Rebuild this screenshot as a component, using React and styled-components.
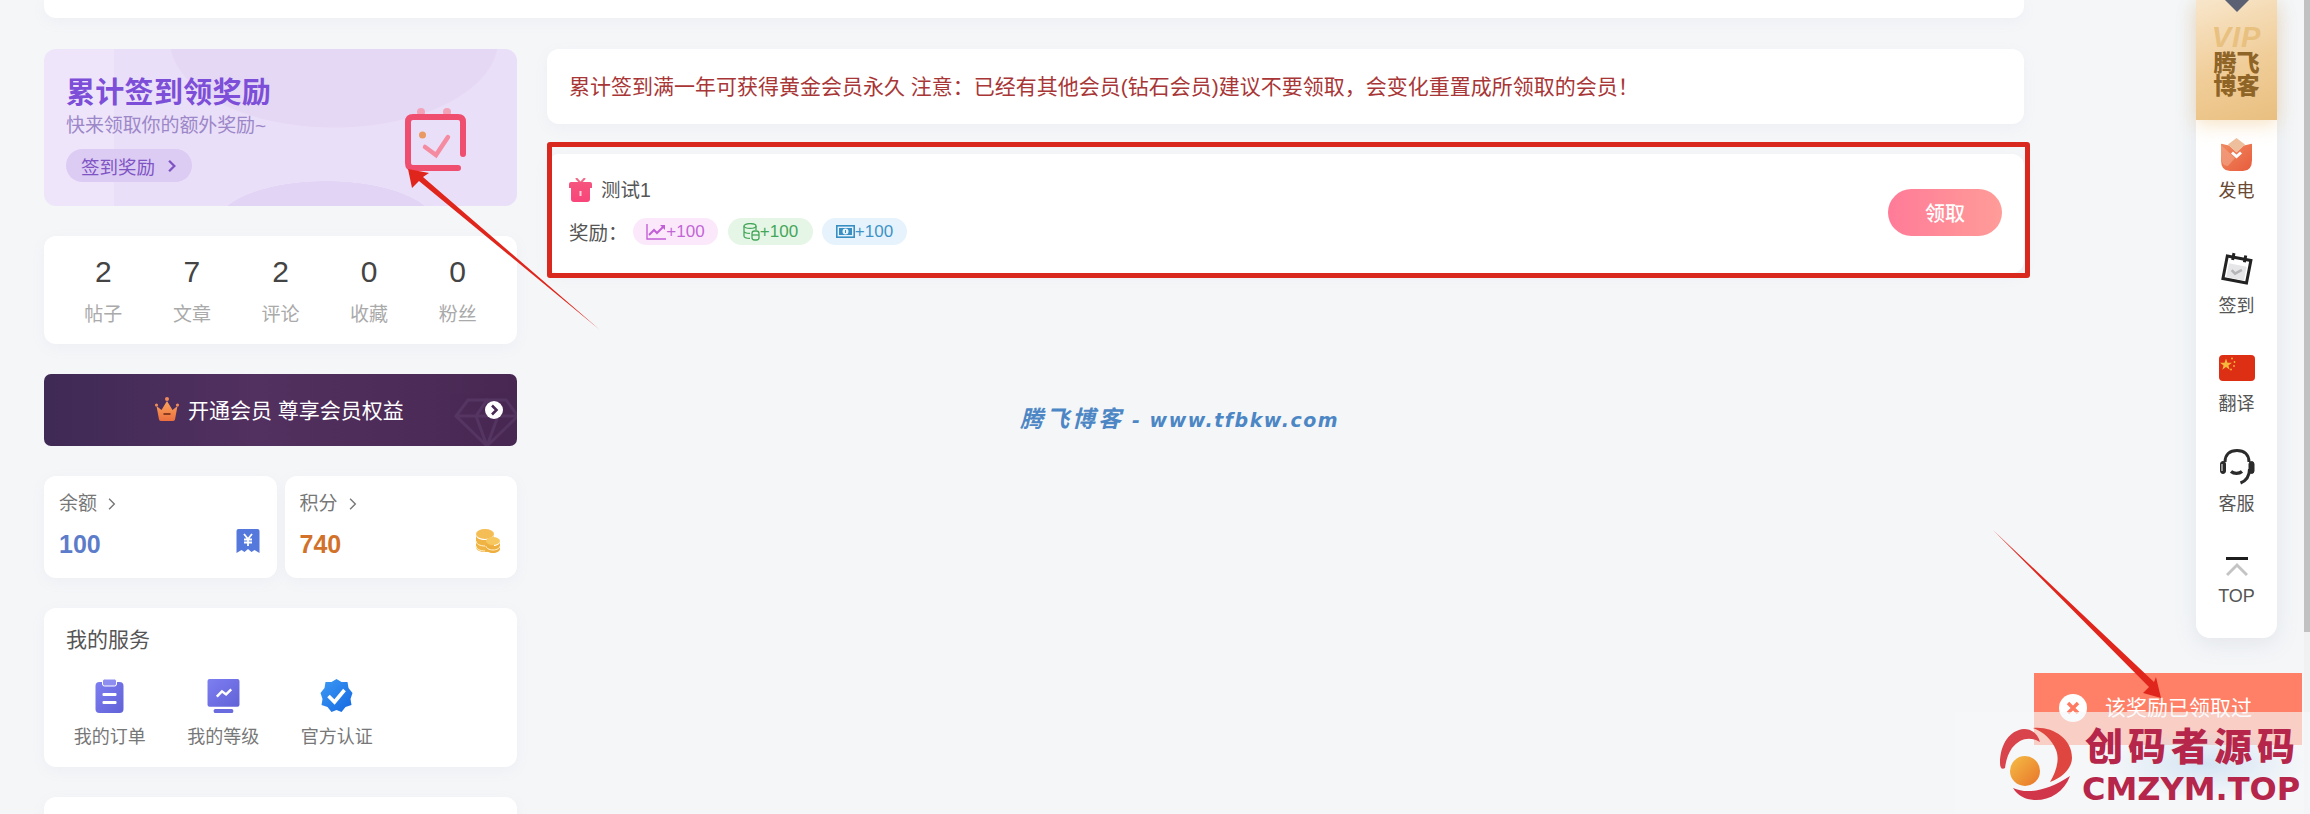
import styled, { createGlobalStyle } from "styled-components";

const GlobalStyle = createGlobalStyle`
  html, body {
    margin: 0;
    padding: 0;
    overflow: hidden;
    background: #f4f6f8;
  }
  * {
    box-sizing: border-box;
  }
  body {
    font-family: "Liberation Sans", "Noto Sans CJK SC", sans-serif;
  }
`;

const NOTICE_TEXT =
  "累计签到满一年可获得黄金会员永久 注意\uFF1A已经有其他会员(钻石会员)建议不要领取\uFF0C会变化重置成所领取的会员\uFF01";

const Page = styled.div`
  position: relative;
  width: 2310px;
  height: 814px;
  overflow: hidden;
  padding: 0 286px 0 44px;
  background: #f4f6f8;
`;

const Card = styled.div`
  background: #fff;
  border-radius: 12px;
  box-shadow: 0 4px 14px rgba(150, 160, 180, 0.07);
`;

const TopCard = styled(Card)`
  height: 18px;
  border-radius: 0 0 12px 12px;
  margin-bottom: 31px;
`;

const Main = styled.div`
  display: grid;
  grid-template-columns: 473px 1477px;
  column-gap: 30px;
`;

const Side = styled.aside`
  display: flex;
  flex-direction: column;
  gap: 30px;
`;

const Content = styled.main`
  display: flex;
  flex-direction: column;
  gap: 30px;
`;

/* sign banner */
const Banner = styled.div`
  height: 157px;
  border-radius: 12px;
  display: flex;
  justify-content: space-between;
  padding: 27px 50px 0 22px;
  background:
    radial-gradient(ellipse 165px 88px at 290px -9px, #e5d8f5 99%, transparent 100%),
    radial-gradient(ellipse 110px 44px at 282px 176px, #e2d4f5 99%, transparent 100%),
    linear-gradient(90deg, #eee5fa 0, #eee5fa 70px, #eadff8 70px);
`;

const BannerText = styled.div`
  display: flex;
  flex-direction: column;
  align-items: flex-start;
`;

const BannerTitle = styled.div`
  font-size: 29px;
  line-height: 34px;
  font-weight: 700;
  letter-spacing: 0.3px;
  color: #7d4fd8;
`;

const BannerSub = styled.div`
  font-size: 19px;
  line-height: 26px;
  margin-top: 3px;
  color: #9c87c9;
  letter-spacing: -0.1px;
`;

const BannerPill = styled.div`
  margin-top: 10px;
  height: 33px;
  width: 126px;
  border-radius: 17px;
  background: #dccbf3;
  color: #7f55c4;
  font-size: 18.5px;
  display: flex;
  align-items: center;
  gap: 10px;
  padding-left: 15px;
`;

const CalendarIcon = styled.svg`
  margin-top: 31px;
  flex: none;
`;

/* stats */
const StatsCard = styled(Card)`
  height: 108px;
  display: grid;
  grid-template-columns: repeat(5, 1fr);
  padding: 0 15px;
`;

const Stat = styled.div`
  display: flex;
  flex-direction: column;
  align-items: center;
  padding-top: 18px;
`;

const StatValue = styled.div`
  font-size: 30px;
  line-height: 36px;
  color: #444;
`;

const StatLabel = styled.div`
  font-size: 19px;
  line-height: 26px;
  margin-top: 12px;
  color: #aaa;
`;

/* vip bar */
const VipBar = styled.div`
  position: relative;
  height: 72px;
  border-radius: 7px;
  overflow: hidden;
  display: flex;
  align-items: center;
  padding: 0 0 3px 110px;
  gap: 8px;
  color: #fff;
  font-size: 21px;
  background: linear-gradient(90deg, #3f2a55 0%, #52305f 45%, #482853 100%);
`;

const VipGem = styled.svg`
  position: absolute;
  right: -8px;
  top: 24px;
`;

const VipGo = styled.svg`
  position: absolute;
  right: 14px;
  top: 27px;
`;

/* balance */
const BalanceRow = styled.div`
  display: grid;
  grid-template-columns: 1fr 1fr;
  gap: 8px;
`;

const BalanceCard = styled(Card)`
  height: 102px;
  padding: 13px 17px 0 15px;
`;

const BalanceHead = styled.div`
  display: flex;
  align-items: center;
  gap: 8px;
  font-size: 19px;
  line-height: 30px;
  color: #777;
`;

const BalanceFoot = styled.div`
  display: flex;
  justify-content: space-between;
  align-items: center;
  margin-top: 7px;
  height: 30px;
`;

const BalanceNum = styled.div`
  font-size: 25px;
  font-weight: 700;
  padding-top: 6px;
  color: ${(p) => p.$color};
`;

/* services */
const ServiceCard = styled(Card)`
  height: 159px;
  padding: 17px 9px 0;
`;

const ServiceTitle = styled.div`
  font-size: 21px;
  line-height: 30px;
  color: #555;
  padding-left: 13px;
`;

const ServiceRow = styled.div`
  display: flex;
  margin-top: 24px;
`;

const ServiceItem = styled.div`
  width: 113.5px;
  display: flex;
  flex-direction: column;
  align-items: center;
  gap: 11px;
  font-size: 18px;
  line-height: 26px;
  color: #777;
`;

const NextCard = styled(Card)`
  height: 60px;
`;

/* right column */
const Notice = styled(Card)`
  height: 75px;
  padding: 0 22px 4px;
  display: flex;
  align-items: center;
  font-size: 21px;
  color: #a83636;
`;

const TaskCard = styled(Card)`
  height: 119px;
  padding: 22px 22px 0;
  display: flex;
  justify-content: space-between;
  align-items: flex-start;
`;

const TaskInfo = styled.div`
  display: flex;
  flex-direction: column;
  gap: 13px;
`;

const TaskTitle = styled.div`
  display: flex;
  align-items: center;
  gap: 9px;
  font-size: 19.5px;
  line-height: 28px;
  color: #555;
`;

const RewardRow = styled.div`
  display: flex;
  align-items: center;
  font-size: 19.5px;
  color: #555;
`;

const RewardLabel = styled.span`
  width: 64px;
`;

const Chip = styled.span`
  display: flex;
  align-items: center;
  justify-content: center;
  width: 85px;
  height: 27px;
  margin-right: ${(p) => p.$gap}px;
  border-radius: 14px;
  font-size: 17px;
  background: ${(p) => p.$bg};
  color: ${(p) => p.$color};
`;

const ClaimButton = styled.button`
  width: 114px;
  height: 47px;
  margin-top: 13px;
  border: 0;
  border-radius: 24px;
  color: #fff;
  font-family: inherit;
  font-size: 20px;
  font-weight: 500;
  background: linear-gradient(90deg, #ff7b98, #ff9c98);
`;

/* floating toolbar on the right */
const FloatPanel = styled.div`
  position: absolute;
  top: 0;
  left: 2196px;
  width: 81px;
  height: 638px;
  background: #fff;
  border-radius: 0 0 14px 14px;
  box-shadow: 0 6px 22px rgba(140, 150, 170, 0.16);
  display: flex;
  flex-direction: column;
  align-items: center;
`;

const GoldBlock = styled.div`
  position: relative;
  width: 100%;
  height: 120px;
  flex: none;
  background: linear-gradient(160deg, #f8e6cb 0%, #f0cd98 55%, #e9bf80 100%);
  box-shadow: 0 4px 18px rgba(238, 190, 120, 0.45);
  display: flex;
  flex-direction: column;
  align-items: center;
  padding-top: 23px;
`;

const GoldTip = styled.div`
  position: absolute;
  top: -17px;
  left: 28.5px;
  width: 24px;
  height: 24px;
  background: #5b6172;
  transform: rotate(45deg);
`;

const GoldVip = styled.div`
  font-size: 29px;
  line-height: 28px;
  font-weight: 700;
  font-style: italic;
  letter-spacing: 1px;
  color: #e8c07f;
`;

const GoldName = styled.div`
  font-size: 23px;
  line-height: 23px;
  font-weight: 900;
  margin-top: 1px;
  color: #8f6427;
  width: 50px;
  text-align: center;
`;

const FloatItem = styled.div`
  display: flex;
  flex-direction: column;
  align-items: center;
  margin-top: ${(p) => p.$top}px;
  gap: ${(p) => p.$gap}px;
`;

const FloatLabel = styled.div`
  font-size: 18px;
  line-height: 20px;
  color: ${(p) => p.$color || "#555"};
`;

const Flag = styled.svg`
  border-radius: 4px;
  display: block;
`;

const Scrollbar = styled.div`
  position: absolute;
  top: 0;
  right: 0;
  width: 6px;
  height: 814px;
  background: #f1f1f1;
  &::before {
    content: "";
    display: block;
    height: 632px;
    background: #c1c1c1;
  }
`;

/* toast + stamps on top of the shot */
const Toast = styled.div`
  position: absolute;
  left: 2034px;
  top: 673px;
  width: 268px;
  height: 72px;
  padding: 21px 0 0 25px;
  background: #ff8066;
  display: flex;
  align-items: flex-start;
  gap: 18px;
  color: #fff;
  font-size: 21px;
  line-height: 28px;
`;

const ToastIcon = styled.svg`
  flex: none;
`;

const WatermarkFade = styled.div`
  position: absolute;
  left: 1955px;
  top: 712px;
  width: 355px;
  height: 102px;
  background:
    radial-gradient(ellipse 100px 34px at 250px 52px, rgba(190, 215, 240, 0.6), transparent),
    rgba(246, 247, 249, 0.65);
`;

const Watermark = styled.div`
  position: absolute;
  left: 2000px;
  top: 722px;
  display: flex;
  gap: 8px;
`;

const WatermarkText = styled.div`
  display: flex;
  flex-direction: column;
  color: #b5264a;
  font-weight: 900;
`;

const WatermarkCn = styled.div`
  font-size: 38px;
  line-height: 46px;
  letter-spacing: 5px;
  padding: 2px 0 0 3px;
`;

const WatermarkEn = styled.div`
  font-family: "DejaVu Sans", sans-serif;
  font-size: 32px;
  line-height: 36px;
  font-weight: 700;
  margin-top: 1px;
`;

const Stamp = styled.div`
  position: absolute;
  left: 1020px;
  top: 404px;
  font-family: "DejaVu Sans", "Noto Sans CJK SC", sans-serif;
  font-size: 19px;
  line-height: 30px;
  font-weight: 700;
  font-style: italic;
  letter-spacing: 1.5px;
  white-space: pre;
  color: #4c86c4;
`;

const StampCn = styled.span`
  font-size: 23px;
  letter-spacing: 3px;
`;

const RedFrame = styled.div`
  position: absolute;
  left: 547px;
  top: 142px;
  width: 1483px;
  height: 136px;
  border: 5px solid #d9291f;
  border-radius: 3px;
`;

const Arrows = styled.svg`
  position: absolute;
  left: 0;
  top: 0;
  pointer-events: none;
`;

function Chevron({ size = 12, color = "#7f55c4", width = 2 }) {
  return (
    <svg width={size} height={size} viewBox="0 0 12 12" fill="none">
      <path d="M3.5 1.5 8 6l-4.5 4.5" stroke={color} strokeWidth={width} />
    </svg>
  );
}

function Crown() {
  return (
    <svg width="26" height="26" viewBox="0 0 25 26">
      <defs>
        <linearGradient id="crownFill" x1="0" y1="0" x2="0" y2="1">
          <stop offset="0" stopColor="#f9a55c" />
          <stop offset="1" stopColor="#ec6f3f" />
        </linearGradient>
      </defs>
      <circle cx="12.5" cy="3" r="2" fill="#f08a5a" />
      <circle cx="2" cy="9" r="1.6" fill="#f08a5a" />
      <circle cx="23" cy="9" r="1.6" fill="#f08a5a" />
      <path d="M2 10l5 4 5.500-9 5.500 9 5-4-2.400 13q-.2 2-2 2H6.400q-1.800 0-2-2z" fill="url(#crownFill)" />
      <rect x="9" y="17" width="7" height="2" fill="#8a3b20" />
    </svg>
  );
}

function ReceiptIcon() {
  return (
    <svg width="24" height="25" viewBox="0 0 23 25">
      <path d="M2 0h19q2 0 2 2v22l-5-3-3 2-3.500-3-3.500 3-3-2-5 3V2q0-2 2-2z" fill="#5478dc" />
      <path d="M7.500 5l4 5 4-5M11.500 10v7M7.500 10.500h8M7.500 13.500h8" stroke="#fff" strokeWidth="1.800" fill="none" />
    </svg>
  );
}

function CoinsIcon() {
  return (
    <svg width="25" height="25" viewBox="0 0 25 25">
      <ellipse cx="10" cy="5" rx="9" ry="5" fill="#f5bd55" />
      <path d="M1 6v12c0 3 4 5 9 5s9-2 9-5V6c0 3-4 5-9 5S1 9 1 6z" fill="#f0b445" />
      <path d="M1 12c0 3 4 5 9 5M1 17c0 3 4 5 9 5" stroke="#fff3d0" fill="none" />
      <ellipse cx="18" cy="12" rx="7" ry="4" fill="#f7c860" />
      <path d="M11 13v7c0 2 3 4 7 4s7-2 7-4v-7c0 2-3 4-7 4s-7-2-7-4z" fill="#eeaf3e" />
      <path d="M11 17c0 2 3 4 7 4s7-2 7-4" stroke="#fff3d0" fill="none" />
    </svg>
  );
}

function ClipboardIcon() {
  return (
    <svg width="29" height="34" viewBox="0 0 28 34">
      <defs>
        <linearGradient id="svcFill" x1="0" y1="0" x2="1" y2="1">
          <stop offset="0" stopColor="#7d7ef0" />
          <stop offset="1" stopColor="#6262d8" />
        </linearGradient>
      </defs>
      <rect x="0" y="3" width="28" height="31" rx="4" fill="url(#svcFill)" />
      <rect x="7" y="0" width="14" height="7" rx="2" fill="#8e8ef0" stroke="#fff" />
      <rect x="7" y="14" width="14" height="3" rx="1" fill="#fff" />
      <rect x="7" y="22" width="14" height="3" rx="1" fill="#fff" />
    </svg>
  );
}

function MonitorIcon() {
  return (
    <svg width="33" height="34" viewBox="0 0 31 33">
      <rect x="0" y="0" width="31" height="27" rx="2" fill="url(#svcFill)" />
      <rect x="6" y="29" width="19" height="4" rx="1.500" fill="#6b6be0" />
      <path d="M9 17l5-5 4 3 5-5" stroke="#fff" strokeWidth="2.400" fill="none" />
    </svg>
  );
}

function VerifiedIcon() {
  return (
    <svg width="33" height="34" viewBox="0 0 32 34">
      <defs>
        <linearGradient id="verFill" x1="0" y1="0" x2="1" y2="1">
          <stop offset="0" stopColor="#3e9bf5" />
          <stop offset="1" stopColor="#1467e0" />
        </linearGradient>
      </defs>
      <path d="M16 0l5 3 6 0 1 6 4 5-2 6 1 6-6 2-4 5-5-2-5 2-4-5-6-2 1-6-2-6 4-5 1-6 6 0z" fill="url(#verFill)" />
      <path d="M8 17l6 6 10-12" stroke="#fff" strokeWidth="3.600" fill="none" />
    </svg>
  );
}

function GiftIcon() {
  return (
    <svg width="23" height="24" viewBox="0 0 23 24">
      <defs>
        <linearGradient id="giftFill" x1="0" y1="0" x2="0" y2="1">
          <stop offset="0" stopColor="#f5557e" />
          <stop offset="1" stopColor="#f8457a" />
        </linearGradient>
      </defs>
      <path d="M7 0l4.500 5L16 0" stroke="#f06a8a" strokeWidth="2" fill="none" />
      <path d="M2 4h19q2 0 2 2v4h-2v11q0 3-3 3H5q-3 0-3-3V10H0V6q0-2 2-2z" fill="url(#giftFill)" />
      <rect x="10.500" y="13" width="2" height="5" fill="#ffd0da" />
    </svg>
  );
}

function ChartChipIcon() {
  return (
    <svg width="20" height="17" viewBox="0 0 20 17" fill="none" stroke="#c25fd6" strokeWidth="1.400">
      <path d="M1 1v15h19" />
      <path d="M3 12l5-5 3 3 7-7" strokeWidth="2" />
      <path d="M14 2h5v5z" fill="#c25fd6" stroke="none" />
    </svg>
  );
}

function DbChipIcon() {
  return (
    <svg width="17" height="18" viewBox="0 0 17 18" fill="none" stroke="#44a65a" strokeWidth="1.300">
      <ellipse cx="7" cy="3" rx="6" ry="2.400" />
      <path d="M1 3v10c0 1.500 2.500 2.400 6 2.400M1 8c0 1.500 2.500 2.400 6 2.400M13 3v4" />
      <rect x="9" y="8" width="7" height="9" rx="2.500" />
      <path d="M9 12h7" />
    </svg>
  );
}

function CashChipIcon() {
  return (
    <svg width="19" height="13" viewBox="0 0 19 13">
      <rect x="0.800" y="0.800" width="17.400" height="11.400" fill="none" stroke="#3a8fc2" strokeWidth="1.600" />
      <rect x="3" y="3" width="13" height="7" fill="#3a8fc2" />
      <circle cx="9.500" cy="6.500" r="3" fill="#e9f4fc" />
      <rect x="9" y="5" width="1" height="3" fill="#3a8fc2" />
    </svg>
  );
}

function PowerIcon() {
  return (
    <svg width="31" height="34" viewBox="0 0 31 34">
      <defs>
        <linearGradient id="powerFill" x1="0" y1="0" x2="1" y2="1">
          <stop offset="0" stopColor="#f08a60" />
          <stop offset="1" stopColor="#e85c3c" />
        </linearGradient>
      </defs>
      <path d="M15.500 0L24 6.500l-8.500 8-8.500-8z" fill="#eebf9d" />
      <path d="M0 6.500q0-1 1.500-.5L8 7.500l7.500 7 7.500-7 6.500-1.500q1.500-.5 1.500.5V22q0 11-9 11H9Q0 33 0 22z" fill="url(#powerFill)" />
      <path d="M0 7l14 13-7 8Q0 28 0 18z" fill="#f2a183" opacity="0.7" />
      <path d="M11 14.500l4.500 4 4.500-4" stroke="#fff" strokeWidth="3" fill="none" />
    </svg>
  );
}

function SignIcon() {
  return (
    <svg width="32" height="33" viewBox="0 0 32 33">
      <g transform="rotate(11 16 17)">
        <rect x="4" y="6" width="24" height="23" fill="#fff" stroke="#222" strokeWidth="3" />
        <rect x="7" y="13" width="18" height="14" fill="#e6e6e8" />
        <path d="M10 2v7M22 2v7" stroke="#222" strokeWidth="3" />
        <path d="M11 19l4 3 6-5" stroke="#b5b5b8" strokeWidth="2.600" fill="none" />
      </g>
    </svg>
  );
}

function FlagIcon() {
  return (
    <Flag width="36" height="26" viewBox="0 0 36 26">
      <rect width="36" height="26" fill="#dc2f14" />
      <path d="M7 3.500l1.500 4.200H13l-3.600 2.700 1.300 4.300L7 12l-3.700 2.700 1.300-4.300L1 7.700h4.500z" fill="#f6b83c" />
      <circle cx="13" cy="3.500" r="0.900" fill="#f6b83c" />
      <circle cx="15.500" cy="7" r="0.900" fill="#f6b83c" />
      <circle cx="15" cy="11" r="0.900" fill="#f6b83c" />
      <circle cx="12" cy="14.500" r="0.900" fill="#f6b83c" />
    </Flag>
  );
}

function HeadsetIcon() {
  return (
    <svg width="36" height="36" viewBox="0 0 36 36" fill="none" stroke="#2b2b2b" strokeWidth="3">
      <path d="M6 13C6 5 11 1.500 18 1.500S30 5 30 13" />
      <path d="M30.500 20c0 8-4 12-9 14" />
      <path d="M12 22.500c3 2.500 8 2.500 11 0" strokeWidth="3.400" />
      <rect x="1.500" y="12.500" width="5" height="12" rx="2.500" fill="#2b2b2b" strokeWidth="1" />
      <path d="M3 15v7" stroke="#fff" strokeWidth="1" />
      <rect x="30" y="12.500" width="5" height="12" rx="2.500" fill="#2b2b2b" strokeWidth="1" />
    </svg>
  );
}

function TopIcon() {
  return (
    <svg width="22" height="20" viewBox="0 0 22 20" fill="none">
      <rect x="0" y="0" width="22" height="3" fill="#1d1d1d" />
      <path d="M1 18L11 8l10 10" stroke="#c4c4c4" strokeWidth="3" />
    </svg>
  );
}

function WatermarkLogo() {
  return (
    <svg width="74" height="78" viewBox="0 0 74 78">
      <defs>
        <linearGradient id="wmCore" x1="0" y1="0" x2="1" y2="1">
          <stop offset="0" stopColor="#f5bd45" />
          <stop offset="1" stopColor="#e8742a" />
        </linearGradient>
      </defs>
      <circle cx="25" cy="49" r="15" fill="url(#wmCore)" />
      <path d="M0 41C0 22 10 8 24 7C32 7 38 12 40 20C30 14 20 16 12 26C8 32 6 38 5 46C2 48 0 46 0 41z" fill="#d9434c" />
      <path d="M33 6C52 4 72 16 72 36C72 46 62 56 50 60C56 50 60 38 56 28C52 18 44 10 33 6z" fill="#df4640" />
      <path d="M13 66C26 72 46 70 70 54C64 70 50 78 36 78C26 78 18 74 13 66z" fill="#d0354a" />
    </svg>
  );
}

export default function App() {
  return (
    <Page>
      <GlobalStyle />
      <TopCard />
      <Main>
        <Side>
          <Banner>
            <BannerText>
              <BannerTitle>累计签到领奖励</BannerTitle>
              <BannerSub>快来领取你的额外奖励~</BannerSub>
              <BannerPill>
                签到奖励
                <Chevron size={14} />
              </BannerPill>
            </BannerText>
            <CalendarIcon width="62" height="65" viewBox="0 0 62 65" fill="none">
              <circle cx="16" cy="5" r="4" fill="#f3a3b8" />
              <circle cx="42" cy="5" r="4" fill="#f3a3b8" />
              <path d="M58 47V15q0-5-5-5H8q-5 0-5 5v41q0 5 5 5h45" stroke="#f04e6e" strokeWidth="6" strokeLinecap="round" />
              <circle cx="17.500" cy="28" r="3.500" fill="#e99a63" />
              <path d="M20 40l11 8 12-18" stroke="#f48ba0" strokeWidth="4.500" strokeLinecap="round" />
            </CalendarIcon>
          </Banner>

          <StatsCard>
            {[["2", "帖子"], ["7", "文章"], ["2", "评论"], ["0", "收藏"], ["0", "粉丝"]].map(([n, label]) => (
              <Stat key={label}>
                <StatValue>{n}</StatValue>
                <StatLabel>{label}</StatLabel>
              </Stat>
            ))}
          </StatsCard>

          <VipBar>
            <Crown />
            开通会员 尊享会员权益
            <VipGem width="76" height="50" viewBox="0 0 66 50" fill="none" stroke="#6a4a78" strokeWidth="3" opacity="0.35">
              <path d="M14 2h38l12 16-31 30L2 18zM2 18h62M22 18l11 30 11-30-11-16z" />
            </VipGem>
            <VipGo width="18" height="18" viewBox="0 0 18 18">
              <circle cx="9" cy="9" r="9" fill="#fff" />
              <path d="M7 4.500 11.500 9 7 13.500" stroke="#4a2a55" strokeWidth="2.600" fill="none" />
            </VipGo>
          </VipBar>

          <BalanceRow>
            <BalanceCard>
              <BalanceHead>
                余额
                <Chevron size={14} color="#777" width={1.200} />
              </BalanceHead>
              <BalanceFoot>
                <BalanceNum $color="#5c7cc9">100</BalanceNum>
                <ReceiptIcon />
              </BalanceFoot>
            </BalanceCard>
            <BalanceCard>
              <BalanceHead>
                积分
                <Chevron size={14} color="#777" width={1.200} />
              </BalanceHead>
              <BalanceFoot>
                <BalanceNum $color="#d2712a">740</BalanceNum>
                <CoinsIcon />
              </BalanceFoot>
            </BalanceCard>
          </BalanceRow>

          <ServiceCard>
            <ServiceTitle>我的服务</ServiceTitle>
            <ServiceRow>
              <ServiceItem>
                <ClipboardIcon />
                我的订单
              </ServiceItem>
              <ServiceItem>
                <MonitorIcon />
                我的等级
              </ServiceItem>
              <ServiceItem>
                <VerifiedIcon />
                官方认证
              </ServiceItem>
            </ServiceRow>
          </ServiceCard>

          <NextCard />
        </Side>

        <Content>
          <Notice>{NOTICE_TEXT}</Notice>
          <TaskCard>
            <TaskInfo>
              <TaskTitle>
                <GiftIcon />
                测试1
              </TaskTitle>
              <RewardRow>
                <RewardLabel>{"奖励\uFF1A"}</RewardLabel>
                <Chip $bg="#fbe9fb" $color="#c266d6" $gap={10}>
                  <ChartChipIcon />
                  +100
                </Chip>
                <Chip $bg="#e6f6e6" $color="#44a65a" $gap={9}>
                  <DbChipIcon />
                  +100
                </Chip>
                <Chip $bg="#e6f3fc" $color="#3f93c6" $gap={0}>
                  <CashChipIcon />
                  +100
                </Chip>
              </RewardRow>
            </TaskInfo>
            <ClaimButton>领取</ClaimButton>
          </TaskCard>
        </Content>
      </Main>

      <Stamp><StampCn>腾飞博客</StampCn> - www.tfbkw.com</Stamp>

      <FloatPanel>
        <GoldBlock>
          <GoldTip />
          <GoldVip>VIP</GoldVip>
          <GoldName>腾飞博客</GoldName>
        </GoldBlock>
        <FloatItem $top={18} $gap={9}>
          <PowerIcon />
          <FloatLabel $color="#6a4a35">发电</FloatLabel>
        </FloatItem>
        <FloatItem $top={51} $gap={11}>
          <SignIcon />
          <FloatLabel>签到</FloatLabel>
        </FloatItem>
        <FloatItem $top={39} $gap={13}>
          <FlagIcon />
          <FloatLabel>翻译</FloatLabel>
        </FloatItem>
        <FloatItem $top={35} $gap={9}>
          <HeadsetIcon />
          <FloatLabel>客服</FloatLabel>
        </FloatItem>
        <FloatItem $top={43} $gap={9}>
          <TopIcon />
          <FloatLabel>TOP</FloatLabel>
        </FloatItem>
      </FloatPanel>
      <Scrollbar />

      <Toast>
        <ToastIcon width="28" height="28" viewBox="0 0 28 28">
          <circle cx="14" cy="14" r="14" fill="#fff" />
          <path d="M9 9l10 10M19 9L9 19" stroke="#ff7a62" strokeWidth="3.400" />
        </ToastIcon>
        该奖励已领取过
      </Toast>
      <WatermarkFade />
      <Watermark>
        <WatermarkLogo />
        <WatermarkText>
          <WatermarkCn>创码者源码</WatermarkCn>
          <WatermarkEn>CMZYM.TOP</WatermarkEn>
        </WatermarkText>
      </Watermark>

      <RedFrame />
      <Arrows width="2310" height="814" viewBox="0 0 2310 814">
        <path d="M408 169 412 188 419 181 600 330 423 177 429 173z" fill="#e0261c" />
        <path d="M2161 698 2143 693 2149 687 1993 530 2154 682 2156 677z" fill="#e0261c" />
      </Arrows>
    </Page>
  );
}
